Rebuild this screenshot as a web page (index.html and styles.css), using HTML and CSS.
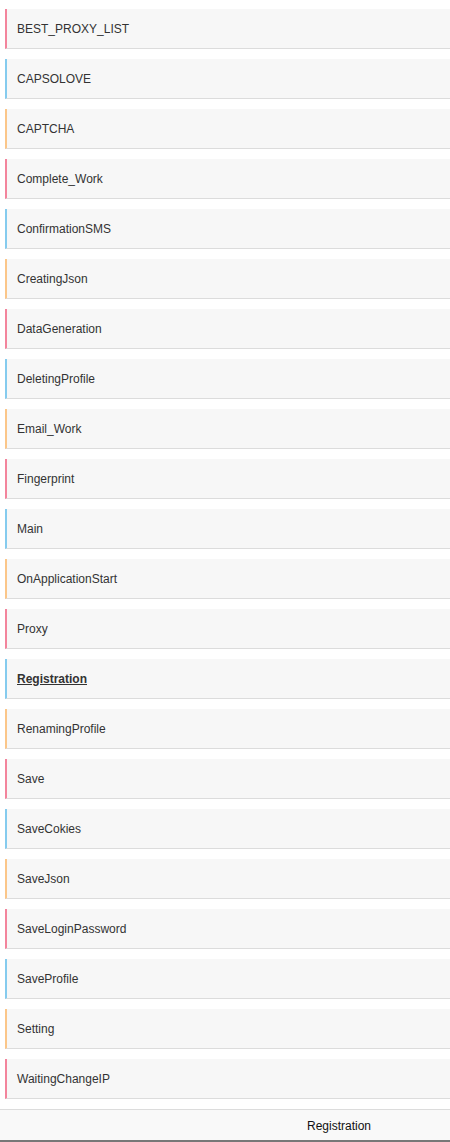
FILE: index.html
```html
<!DOCTYPE html>
<html lang="en">
<head>
    <meta charset="UTF-8">
    <meta name="viewport" content="width=device-width, initial-scale=1.0">
    <title>Functions</title>
    <link rel="stylesheet" href="styles.css">
</head>
<body>

<div class="page">
    <ul class="func-list">
        <li class="func pink">BEST_PROXY_LIST</li>
        <li class="func blue">CAPSOLOVE</li>
        <li class="func orange">CAPTCHA</li>
        <li class="func pink">Complete_Work</li>
        <li class="func blue">ConfirmationSMS</li>
        <li class="func orange">CreatingJson</li>
        <li class="func pink">DataGeneration</li>
        <li class="func blue">DeletingProfile</li>
        <li class="func orange">Email_Work</li>
        <li class="func pink">Fingerprint</li>
        <li class="func blue">Main</li>
        <li class="func orange">OnApplicationStart</li>
        <li class="func pink">Proxy</li>
        <li class="func blue active">Registration</li>
        <li class="func orange">RenamingProfile</li>
        <li class="func pink">Save</li>
        <li class="func blue">SaveCokies</li>
        <li class="func orange">SaveJson</li>
        <li class="func pink">SaveLoginPassword</li>
        <li class="func blue">SaveProfile</li>
        <li class="func orange">Setting</li>
        <li class="func pink">WaitingChangeIP</li>
    </ul>

    <div class="status-bar">
        <span class="status-name">Registration</span>
    </div>
</div>

</body>
</html>
```

FILE: styles.css
```css
html, body {
    margin: 0;
    padding: 0;
    background-color: #fff;
}

body {
    font-family: 'Liberation Sans', Arial, sans-serif;
    font-size: 12px;
    color: #333;
    overflow: hidden;
}

.page {
    width: 450px;
    height: 1142px;
    display: flex;
    flex-direction: column;
}

.func-list {
    list-style: none;
    margin: 0;
    padding: 9px 0 0 5px;
}

.func {
    height: 39px;
    line-height: 41px;
    padding-left: 10px;
    margin-bottom: 10px;
    background-color: #f7f7f7;
    border-left: 2px solid #f08ca0;
    border-bottom: 1px solid #dcdcdc;
    white-space: nowrap;
}

.func.pink {
    border-left-color: #f3849c;
}

.func.blue {
    border-left-color: #85cbee;
}

.func.orange {
    border-left-color: #fbc689;
}

.func.active {
    font-weight: bold;
    text-decoration: underline;
}

.status-bar {
    flex: 1;
    display: flex;
    align-items: center;
    padding: 2px 0 0 307px;
    background-color: #f9f9f9;
    border-top: 1px solid #dcdcdc;
    border-bottom: 2px solid #777;
}

.status-name {
    color: #111;
}
```
